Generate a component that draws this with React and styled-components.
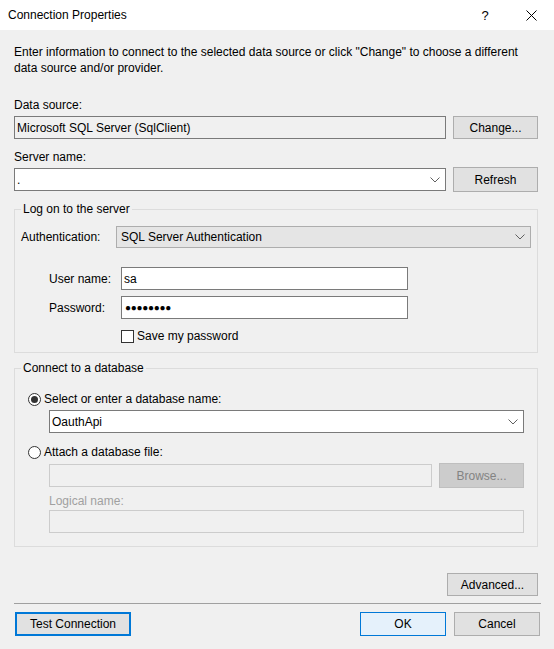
import React from "react";
import styled, { createGlobalStyle } from "styled-components";

const GlobalStyle = createGlobalStyle`
  html, body { margin: 0; padding: 0; background: #f0f0f0; }
  body {
    font-family: "Segoe UI", "Liberation Sans", Arial, sans-serif;
    font-size: 12px;
    color: #000;
  }
  #root { width: 554px; height: 649px; }
  * { box-sizing: border-box; }
`;

const Window = styled.div`
  width: 554px;
  height: 649px;
  background: #f0f0f0;
  display: flex;
  flex-direction: column;
  overflow: hidden;
`;

const TitleBar = styled.div`
  height: 30px;
  flex: none;
  background: #fff;
  display: flex;
  align-items: center;
  padding-left: 8px;
`;

const Title = styled.div`
  flex: 1;
  line-height: 16px;
`;

const CaptionButton = styled.div`
  width: 46px;
  height: 30px;
  display: flex;
  align-items: center;
  justify-content: center;
  font-size: 13px;
  color: #000;
`;

const Body = styled.div`
  padding: 14px 16px 0 14px;
  display: flex;
  flex-direction: column;
`;

const Description = styled.div`
  line-height: 16px;
`;

const Label = styled.div`
  line-height: 16px;
  margin-top: ${(p) => p.$mt || 0}px;
  color: ${(p) => (p.$disabled ? "#a0a0a0" : "#000")};
`;

const Row = styled.div`
  display: flex;
  align-items: center;
  gap: ${(p) => p.$gap ?? 7}px;
  margin-top: ${(p) => p.$mt || 0}px;
  height: ${(p) => p.$h || 23}px;
`;

const TextBox = styled.div`
  flex: ${(p) => (p.$width ? "none" : "1")};
  width: ${(p) => (p.$width ? `${p.$width}px` : "auto")};
  height: ${(p) => p.$h || 23}px;
  border: 1px solid ${(p) => (p.$disabled ? "#cccccc" : "#7a7a7a")};
  background: ${(p) => (p.$disabled || p.$readonly ? "#f0f0f0" : "#fff")};
  padding: 0 2px;
  display: flex;
  align-items: center;
  line-height: 16px;
  white-space: nowrap;
  overflow: hidden;
`;

const ComboBox = styled.div`
  flex: 1;
  height: ${(p) => p.$h || 23}px;
  border: 1px solid ${(p) => (p.$button ? "#adadad" : "#7a7a7a")};
  background: ${(p) => (p.$button ? "#e5e5e5" : "#fff")};
  padding: 0 5px 0 ${(p) => (p.$button ? 4 : 2)}px;
  display: flex;
  align-items: center;
  line-height: 16px;
`;

const ComboText = styled.span`
  flex: 1;
  white-space: nowrap;
`;

const Button = styled.div`
  flex: none;
  width: ${(p) => p.$width}px;
  height: ${(p) => p.$h || 23}px;
  border: ${(p) => (p.$focus ? "2px solid #0078d7" : p.$default ? "1px solid #0078d7" : p.$disabled ? "1px solid #bfbfbf" : "1px solid #adadad")};
  background: ${(p) => (p.$default ? "#e5f1fb" : p.$disabled ? "#cccccc" : "#e1e1e1")};
  color: ${(p) => (p.$disabled ? "#838383" : "#000")};
  display: flex;
  align-items: center;
  justify-content: center;
  line-height: 16px;
  margin-left: ${(p) => p.$ml || 0}px;
`;

const Group = styled.fieldset`
  margin: ${(p) => p.$mt || 0}px 0 0 0;
  border: 1px solid #dcdcdc;
  padding: ${(p) => p.$pt || 0}px 6px ${(p) => p.$pb || 0}px 6px;
  min-width: 0;
`;

const Legend = styled.legend`
  padding: 0 2px;
  line-height: 16px;
`;

const AuthLabel = styled.div`
  width: 95px;
  flex: none;
  line-height: 16px;
`;

const LoginGrid = styled.div`
  display: grid;
  grid-template-columns: 72px 287px;
  row-gap: 6px;
  padding-left: 28px;
  margin-top: 19px;
  align-items: center;
`;

const GridLabel = styled.div`
  line-height: 16px;
`;

const CheckRow = styled.label`
  grid-column: 2;
  display: flex;
  align-items: center;
  gap: 3px;
  line-height: 16px;
  margin-top: 3px;
`;

const CheckBox = styled.span`
  width: 13px;
  height: 13px;
  border: 1px solid #333;
  background: #fff;
  flex: none;
`;

const DbSection = styled.div`
  padding: 15px 7px 0 7px;
`;

const RadioRow = styled.div`
  display: flex;
  align-items: center;
  gap: 3px;
  line-height: 16px;
  margin-top: ${(p) => p.$mt || 0}px;
`;

const Radio = styled.span`
  width: 13px;
  height: 13px;
  border-radius: 50%;
  border: 1px solid #333;
  background: #fff;
  flex: none;
  display: flex;
  align-items: center;
  justify-content: center;
  &::after {
    content: "";
    display: ${(p) => (p.$checked ? "block" : "none")};
    width: 7px;
    height: 7px;
    border-radius: 50%;
    background: #333;
  }
`;

const Indent = styled.div`
  padding-left: 21px;
  display: flex;
  flex-direction: column;
`;

const Dots = styled.span`
  font-size: 10px;
  letter-spacing: -0.3px;
  line-height: 16px;
  padding-left: 1px;
`;

const AdvancedRow = styled.div`
  display: flex;
  justify-content: flex-end;
  margin-top: 26px;
`;

const Separator = styled.div`
  height: 1px;
  background: #a0a0a0;
  margin: 7px -3px 0 0;
`;

const Footer = styled.div`
  display: flex;
  align-items: center;
  margin-top: 8px;
  margin-right: -2px;
  padding-left: 1px;
`;

const Spacer = styled.div`
  flex: 1;
`;

const Chevron = () => (
  <svg width="10" height="6" viewBox="0 0 10 6">
    <path d="M0.5 0.5 L5 5 L9.5 0.5" fill="none" stroke="#606060" strokeWidth="1" />
  </svg>
);

const CloseIcon = () => (
  <svg width="11" height="11" viewBox="0 0 11 11">
    <path d="M0.5 0.5 L10.5 10.5 M10.5 0.5 L0.5 10.5" stroke="#000" strokeWidth="1" />
  </svg>
);

export default function App() {
  return (
    <>
      <GlobalStyle />
      <Window>
        <TitleBar>
          <Title>Connection Properties</Title>
          <CaptionButton>?</CaptionButton>
          <CaptionButton>
            <CloseIcon />
          </CaptionButton>
        </TitleBar>
        <Body>
          <Description>
            Enter information to connect to the selected data source or click "Change" to choose a different
            <br />
            data source and/or provider.
          </Description>

          <Label $mt={21}>Data source:</Label>
          <Row $mt={3}>
            <TextBox $readonly>Microsoft SQL Server (SqlClient)</TextBox>
            <Button $width={85}>Change...</Button>
          </Row>

          <Label $mt={10}>Server name:</Label>
          <Row $mt={2} $h={25}>
            <ComboBox>
              <ComboText>.</ComboText>
              <Chevron />
            </ComboBox>
            <Button $width={85} $h={25}>Refresh</Button>
          </Row>

          <Group $mt={9} $pt={9} $pb={8}>
            <Legend>Log on to the server</Legend>
            <Row $h={22} $gap={0}>
              <AuthLabel>Authentication:</AuthLabel>
              <ComboBox $button $h={22}>
                <ComboText>SQL Server Authentication</ComboText>
                <Chevron />
              </ComboBox>
            </Row>
            <LoginGrid>
              <GridLabel>User name:</GridLabel>
              <TextBox>sa</TextBox>
              <GridLabel>Password:</GridLabel>
              <TextBox>
                <Dots>●●●●●●●●</Dots>
              </TextBox>
              <CheckRow>
                <CheckBox />
                Save my password
              </CheckRow>
            </LoginGrid>
          </Group>

          <Group $mt={7} $pb={13}>
            <Legend>Connect to a database</Legend>
            <DbSection>
              <RadioRow>
                <Radio $checked />
                Select or enter a database name:
              </RadioRow>
              <Indent>
                <Row $mt={3}>
                  <ComboBox>
                    <ComboText>OauthApi</ComboText>
                    <Chevron />
                  </ComboBox>
                </Row>
              </Indent>
              <RadioRow $mt={11}>
                <Radio />
                Attach a database file:
              </RadioRow>
              <Indent>
                <Row $mt={3} $h={25}>
                  <TextBox $disabled />
                  <Button $width={85} $h={25} $disabled>Browse...</Button>
                </Row>
                <Label $mt={5} $disabled>Logical name:</Label>
                <Row $mt={1} $h={23}>
                  <TextBox $disabled />
                </Row>
              </Indent>
            </DbSection>
          </Group>

          <AdvancedRow>
            <Button $width={91}>Advanced...</Button>
          </AdvancedRow>
          <Separator />
          <Footer>
            <Button $width={116} $h={24} $focus>Test Connection</Button>
            <Spacer />
            <Button $width={86} $h={24} $default>OK</Button>
            <Button $width={86} $h={24} $ml={8}>Cancel</Button>
          </Footer>
        </Body>
      </Window>
    </>
  );
}
